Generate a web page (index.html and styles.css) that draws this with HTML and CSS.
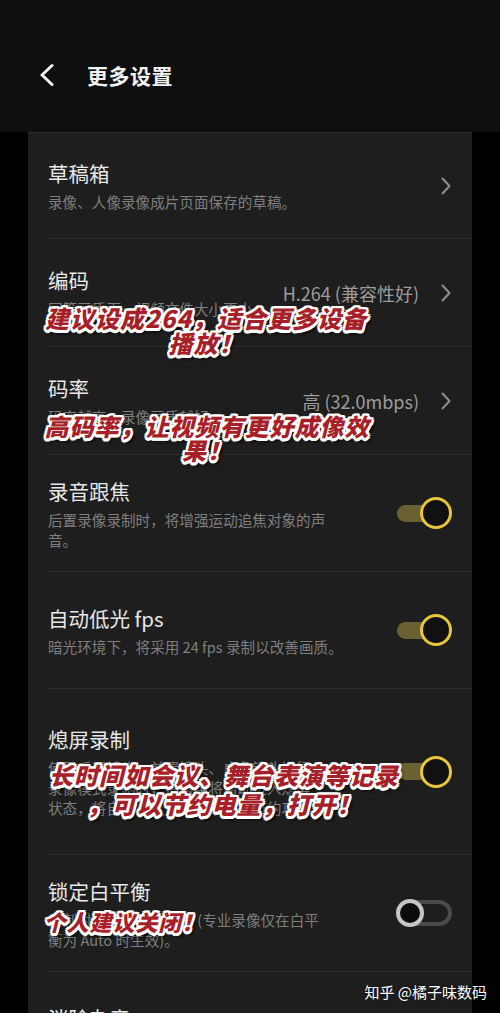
FILE: index.html
```html
<!DOCTYPE html>
<html lang="zh-CN">
<head>
<meta charset="utf-8">
<title>更多设置</title>
<link rel="stylesheet" href="styles.css">
</head>
<body>
<div class="screen">
  <header class="topbar">
    <svg class="back" width="16" height="24" viewBox="0 0 16 24"><path d="M14 2.5 L4 12 L14 21.5" fill="none" stroke="#f2f2f2" stroke-width="3" stroke-linecap="round" stroke-linejoin="round"/></svg>
    <h1 class="page-title">更多设置</h1>
  </header>

  <main class="card">
    <div class="row row-nav row-first">
      <div class="text">
        <div class="title">草稿箱</div>
        <div class="sub">录像、人像录像成片页面保存的草稿。</div>
      </div>
      <svg class="chev" width="12" height="18" viewBox="0 0 12 18"><path d="M2.5 1.5 L9.5 9 L2.5 16.5" fill="none" stroke="#8e8e8e" stroke-width="2" stroke-linecap="round" stroke-linejoin="round"/></svg>
    </div>

    <div class="row row-nav">
      <div class="text">
        <div class="title">编码</div>
        <div class="sub">同等画质下，视频文件大小更小。</div>
      </div>
      <span class="value">H.264 (兼容性好)</span>
      <svg class="chev" width="12" height="18" viewBox="0 0 12 18"><path d="M2.5 1.5 L9.5 9 L2.5 16.5" fill="none" stroke="#8e8e8e" stroke-width="2" stroke-linecap="round" stroke-linejoin="round"/></svg>
    </div>

    <div class="row row-nav">
      <div class="text">
        <div class="title">码率</div>
        <div class="sub">码率越高，录像画质越好。</div>
      </div>
      <span class="value">高 (32.0mbps)</span>
      <svg class="chev" width="12" height="18" viewBox="0 0 12 18"><path d="M2.5 1.5 L9.5 9 L2.5 16.5" fill="none" stroke="#8e8e8e" stroke-width="2" stroke-linecap="round" stroke-linejoin="round"/></svg>
    </div>

    <div class="row row-toggle">
      <div class="text">
        <div class="title">录音跟焦</div>
        <div class="sub">后置录像录制时，将增强运动追焦对象的声<br>音。</div>
      </div>
      <span class="toggle on"><span class="track"></span><span class="knob"></span></span>
    </div>

    <div class="row row-toggle">
      <div class="text">
        <div class="title">自动低光 fps</div>
        <div class="sub">暗光环境下，将采用 24 fps 录制以改善画质。</div>
      </div>
      <span class="toggle on"><span class="track"></span><span class="knob"></span></span>
    </div>

    <div class="row row-toggle row-tall">
      <div class="text">
        <div class="title">熄屏录制</div>
        <div class="sub">使用后置镜头、前置镜头、广角镜头进行<br>录像模式录制时，拍摄中将自动进入熄屏<br>状态，将自动熄灭屏幕继续录制节约功耗。</div>
      </div>
      <span class="toggle on"><span class="track"></span><span class="knob"></span></span>
    </div>

    <div class="row row-toggle">
      <div class="text">
        <div class="title">锁定白平衡</div>
        <div class="sub">录制时锁定当前白平衡 (专业录像仅在白平<br>衡为 Auto 时生效)。</div>
      </div>
      <span class="toggle off"><span class="track"></span><span class="knob"></span></span>
    </div>

    <div class="row row-toggle">
      <div class="text">
        <div class="title">消除杂音</div>
        <div class="sub">录像时将降低环境中的杂音。</div>
      </div>
      <span class="toggle on"><span class="track"></span><span class="knob"></span></span>
    </div>
  </main>

  <div class="cap cap1"><span class="line">建议设成264，适合更多设备</span><span class="line">播放！</span></div>
  <div class="cap cap2"><span class="line">高码率，让视频有更好成像效</span><span class="line">果！</span></div>
  <div class="cap cap3"><span class="line">长时间如会议、舞台表演等记录</span><span class="line">，可以节约电量，打开！</span></div>
  <div class="cap cap4"><span class="line">个人建议关闭！</span></div>

  <div class="watermark">知乎 @橘子味数码</div>
</div>
</body>
</html>
```

FILE: styles.css
```css
* { box-sizing: border-box; }

html, body {
  margin: 0;
  padding: 0;
  background: #000;
}

body {
  font-family: "Noto Sans CJK SC", "Noto Sans", sans-serif;
}

.screen {
  position: relative;
  width: 500px;
  height: 1013px;
  overflow: hidden;
  background: #000;
}

.topbar {
  height: 132px;
  background: #0f0f0f;
  display: flex;
  align-items: flex-start;
  padding: 61px 0 0 38px;
}

.back {
  display: block;
  margin-top: 2px;
  flex: none;
}

.page-title {
  margin: 0 0 0 33px;
  font-size: 21px;
  line-height: 28px;
  font-weight: 700;
  color: #f2f2f2;
  letter-spacing: 0.5px;
}

.card {
  margin: 0 28px;
  background: #1e1e1e;
  border-top: 1px solid #2e2e2e;
}

.row {
  display: flex;
  align-items: center;
  margin-left: 20px;
  padding-right: 20px;
  border-bottom: 1px solid #2b2b2b;
}

.row-nav {
  padding-top: 27px;
  padding-bottom: 27px;
}

.row-first {
  padding-top: 26px;
  padding-bottom: 26px;
}

.row-toggle {
  min-height: 117px;
}

.row-tall {
  min-height: 166px;
}

.text {
  flex: 1;
  min-width: 0;
}

.title {
  font-size: 20.5px;
  line-height: 28px;
  color: #e8e8e8;
}

.sub {
  margin-top: 5px;
  font-size: 14.6px;
  line-height: 20px;
  color: #7f7f7f;
  white-space: nowrap;
}

.value {
  flex: none;
  font-size: 18px;
  line-height: 24px;
  color: #9c9c9c;
  margin-right: 21px;
}

.chev {
  display: block;
  flex: none;
}

.toggle {
  position: relative;
  flex: none;
  width: 56px;
  height: 32px;
  margin-left: 12px;
}

.toggle .track {
  position: absolute;
  border-radius: 14px;
}

.toggle .knob {
  position: absolute;
  border-radius: 50%;
}

.toggle.on .track {
  left: 1px;
  top: 7.5px;
  width: 44px;
  height: 17px;
  background: #6a6132;
}

.toggle.on .knob {
  right: 0;
  top: 0;
  width: 32px;
  height: 32px;
  border: 3.5px solid #e8c53a;
  background: #111;
}

.toggle.off .track {
  left: 1px;
  top: 3px;
  width: 55px;
  height: 26px;
  border: 4px solid #4a4a4a;
  background: #1e1e1e;
}

.toggle.off .knob {
  left: 0;
  top: 2px;
  width: 28px;
  height: 28px;
  border: 4px solid #c6c6c6;
  background: #0c0c0c;
}

.cap {
  position: absolute;
  display: flex;
  flex-direction: column;
  align-items: center;
  font-family: "Noto Sans CJK SC", sans-serif;
  font-weight: 900;
  font-style: italic;
  font-size: 24px;
  line-height: 25px;
  letter-spacing: 1px;
  color: #a61f29;
  white-space: nowrap;
  text-shadow:
    2.5px 0 0 #fff, -2.5px 0 0 #fff, 0 2.5px 0 #fff, 0 -2.5px 0 #fff,
    2px 2px 0 #fff, -2px 2px 0 #fff, 2px -2px 0 #fff, -2px -2px 0 #fff,
    1px 2.5px 0 #fff, -1px 2.5px 0 #fff, 1px -2.5px 0 #fff, -1px -2.5px 0 #fff,
    3px 3.5px 3px rgba(0, 0, 0, 0.85);
}

.cap .line {
  display: block;
}

.cap1 {
  left: 45px;
  top: 305px;
  width: 322px;
}

.cap2 {
  left: 50px;
  top: 414px;
  width: 314px;
  line-height: 24px;
}

.cap3 {
  left: 46px;
  top: 760px;
  width: 356px;
  line-height: 29px;
}

.cap4 {
  left: 47px;
  top: 909px;
  width: 154px;
  font-size: 22px;
}

.watermark {
  position: absolute;
  right: 13px;
  top: 982px;
  font-size: 15px;
  line-height: 20px;
  color: #fff;
  text-shadow: 0 0 3px rgba(0, 0, 0, 0.7);
}
```
